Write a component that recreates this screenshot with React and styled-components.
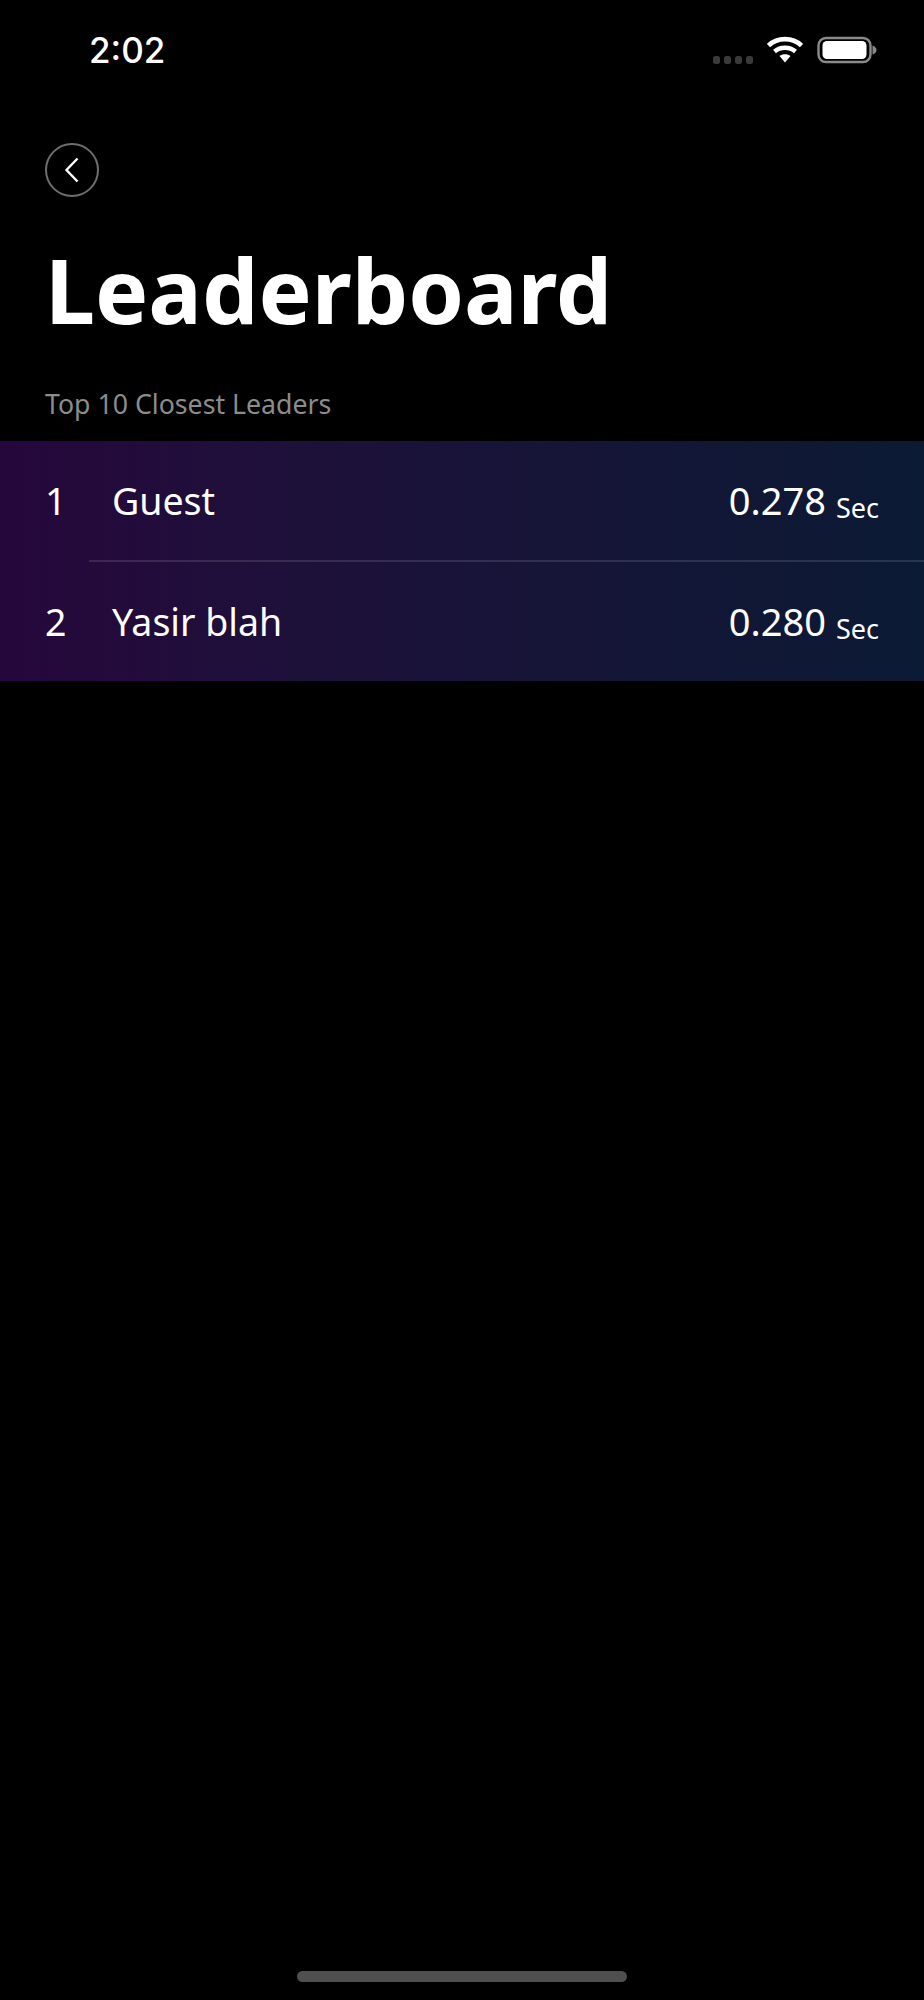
import React from "react";
import styled, { createGlobalStyle } from "styled-components";

const Global = createGlobalStyle`
  html, body { margin: 0; padding: 0; background: #000; }
  body { font-family: "Noto Sans", "Open Sans", sans-serif; color: #fff; }
`;

const Screen = styled.div`
  width: 924px;
  height: 2000px;
  background: #000;
  display: flex;
  flex-direction: column;
  overflow: hidden;
`;

const StatusBar = styled.div`
  height: 100px;
  box-sizing: border-box;
  padding: 30px 47px 0 89px;
  display: flex;
  justify-content: space-between;
  align-items: flex-start;
`;

const Time = styled.span`
  font-family: Inter, sans-serif;
  font-weight: 500;
  font-size: 35px;
  line-height: 41px;
`;

const StatusIcons = styled.div`
  display: flex;
  align-items: flex-start;
  gap: 14px;
  margin-top: 6px;
`;

const Signal = styled.div`
  display: flex;
  gap: 3.5px;
  margin-top: 20px;
`;

const SignalDot = styled.i`
  width: 7.5px;
  height: 7.5px;
  border-radius: 2.5px;
  background: #3a3a3a;
`;

const Content = styled.div`
  display: flex;
  flex-direction: column;
  align-items: flex-start;
  padding: 43px 45px 0;
`;

const BackButton = styled.button`
  width: 54px;
  height: 54px;
  padding: 0;
  border: 2.5px solid #6e6e6e;
  border-radius: 50%;
  background: transparent;
  display: flex;
  align-items: center;
  justify-content: center;
`;

const Title = styled.h1`
  margin: 42px 0 0;
  font-size: 89.4px;
  line-height: 100px;
  font-weight: 700;
  color: #fff;
`;

const Subtitle = styled.p`
  margin: 47px 0 0;
  font-size: 26.7px;
  line-height: 36px;
  color: #8c8c8c;
`;

const Board = styled.div`
  margin-top: 19px;
  background: linear-gradient(90deg, #26073c 0%, #1e103a 30%, #0b1a34 100%);
`;

const Row = styled.div`
  height: 119px;
  display: flex;
  align-items: center;
  box-sizing: border-box;
`;

const Divider = styled.div`
  height: 2px;
  margin-left: 89px;
  background: rgba(255, 255, 255, 0.12);
`;

const Rank = styled.span`
  width: 112px;
  padding-left: 45px;
  box-sizing: border-box;
  font-size: 37.5px;
  line-height: 48px;
`;

const Name = styled.span`
  flex: 1;
  font-size: 37.5px;
  line-height: 48px;
`;

const Score = styled.span`
  padding: 3px 45px 0 0;
  font-size: 38px;
  line-height: 48px;
  display: flex;
  align-items: baseline;
  gap: 10px;
`;

const Unit = styled.small`
  font-size: 27px;
  position: relative;
  top: 3px;
`;

const HomeSlot = styled.div`
  margin-top: auto;
  padding-bottom: 18px;
  display: flex;
  justify-content: center;
`;

const HomeBar = styled.div`
  width: 330px;
  height: 11px;
  border-radius: 6px;
  background: #4f4f4f;
`;

const rows = [
  { rank: 1, name: "Guest", score: "0.278" },
  { rank: 2, name: "Yasir blah", score: "0.280" },
];

export default function App() {
  return (
    <Screen>
      <Global />
      <StatusBar>
        <Time>2:02</Time>
        <StatusIcons>
          <Signal>
            <SignalDot /><SignalDot /><SignalDot /><SignalDot />
          </Signal>
          <svg width="36" height="28" viewBox="0 0 36 28" fill="none">
            <path d="M1.5 9.5 C10.5 1 25.5 1 34.5 9.5" stroke="#fff" strokeWidth="4.6" />
            <path d="M7.5 15.5 C13.5 10.5 22.5 10.5 28.5 15.5" stroke="#fff" strokeWidth="4.6" />
            <path d="M12.5 20 C15.5 17.5 20.5 17.5 23.5 20 L18 26.5 Z" fill="#fff" />
          </svg>
          <svg width="60" height="28" viewBox="0 0 60 28" fill="none">
            <rect x="1.5" y="2" width="52" height="24" rx="7.5" stroke="#8a8a8a" strokeWidth="2.4" />
            <rect x="5.5" y="5" width="44" height="18" rx="4.5" fill="#fff" />
            <path d="M55.5 9.5 C58 10.5 59.5 12 59.5 14 C59.5 16 58 17.5 55.5 18.5 Z" fill="#8a8a8a" />
          </svg>
        </StatusIcons>
      </StatusBar>
      <Content>
        <BackButton aria-label="Back">
          <svg width="18" height="28" viewBox="0 0 18 28" fill="none">
            <path d="M14.5 2.5 L3.5 14 L14.5 25.5" stroke="#fff" strokeWidth="2.4" />
          </svg>
        </BackButton>
        <Title>Leaderboard</Title>
        <Subtitle>Top 10 Closest Leaders</Subtitle>
      </Content>
      <Board>
        {rows.map((r, i) => (
          <React.Fragment key={r.rank}>
            {i > 0 && <Divider />}
            <Row>
              <Rank>{r.rank}</Rank>
              <Name>{r.name}</Name>
              <Score>
                {r.score}
                <Unit>Sec</Unit>
              </Score>
            </Row>
          </React.Fragment>
        ))}
      </Board>
      <HomeSlot>
        <HomeBar />
      </HomeSlot>
    </Screen>
  );
}
